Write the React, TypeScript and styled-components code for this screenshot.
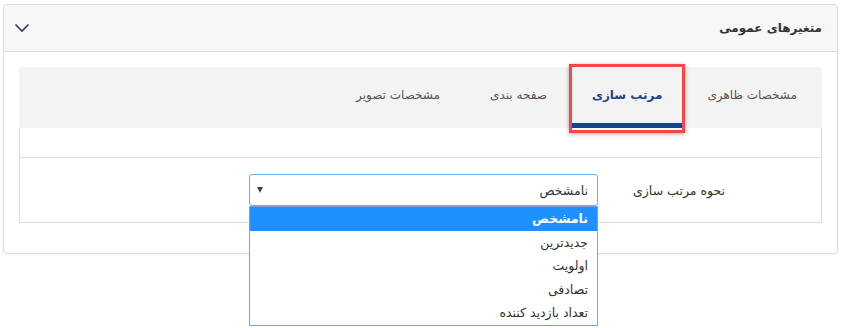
import React from "react";
import styled, { createGlobalStyle } from "styled-components";

const GlobalStyle = createGlobalStyle`
  html, body {
    margin: 0;
    min-height: 100%;
    background: #fff;
    font-family: "DejaVu Sans", "Noto Sans", sans-serif;
  }
`;

const Page = styled.div`
  min-height: 328px;
  padding: 4px 3px 0 3px;
  box-sizing: border-box;
`;

const Card = styled.div`
  border: 1px solid #dcdcdc;
  border-radius: 4px;
  background: #fff;
  box-shadow: 0 1px 2px rgba(0, 0, 0, 0.05);
`;

const CardHeader = styled.div`
  direction: rtl;
  display: flex;
  align-items: center;
  justify-content: space-between;
  height: 46px;
  padding: 0 15px 0 10px;
  background: #f7f7f7;
  border-bottom: 1px solid #dcdcdc;
  border-radius: 4px 4px 0 0;
`;

const Title = styled.h3`
  margin: 0;
  font-size: 12px;
  font-weight: bold;
  color: #333;
`;

const CardBody = styled.div`
  padding: 15px 15px 30px 15px;
`;

const TabPanel = styled.div`
  direction: rtl;
`;

const TabBar = styled.ul`
  display: flex;
  margin: 0;
  padding: 0;
  list-style: none;
  height: 61px;
  background: #f3f3f3;
`;

const Tab = styled.li<{ $active?: boolean }>`
  position: relative;
  display: flex;
  align-items: center;
  padding: 0 ${(p) => (p.$active ? 20 : 25)}px;
  font-size: 12px;
  color: ${(p) => (p.$active ? "#24408a" : "#555")};
  font-weight: ${(p) => (p.$active ? "bold" : "normal")};
  border-bottom: 5px solid ${(p) => (p.$active ? "#12449a" : "transparent")};
  box-sizing: border-box;
`;

const Highlight = styled.span`
  position: absolute;
  top: -3px;
  bottom: -10px;
  left: -3px;
  right: -3px;
  border: 3px solid #f24848;
  box-shadow: 0 1px 4px rgba(0, 0, 0, 0.35);
  pointer-events: none;
`;

const TabContent = styled.div`
  border: 1px solid #dcdcdc;
  border-top: none;
  padding-top: 29px;
`;

const FormRow = styled.div`
  display: flex;
  align-items: center;
  height: 64px;
  border-top: 1px solid #dcdcdc;
`;

const Label = styled.label`
  width: 223px;
  box-sizing: border-box;
  padding-right: 96px;
  font-size: 12.5px;
  color: #333;
  white-space: nowrap;
`;

const SelectWrap = styled.div`
  position: relative;
  width: 349px;
`;

const SelectBox = styled.div`
  display: flex;
  align-items: center;
  justify-content: space-between;
  height: 32px;
  box-sizing: border-box;
  padding: 0 9px 0 7px;
  border: 1px solid #66afe9;
  border-radius: 3px;
  font-size: 12.5px;
  color: #333;
`;

const Arrow = styled.span`
  width: 0;
  height: 0;
  border-left: 3px solid transparent;
  border-right: 3px solid transparent;
  border-top: 6px solid #444;
`;

const Options = styled.ul`
  position: absolute;
  z-index: 5;
  top: 32px;
  left: 0;
  right: 0;
  margin: 0;
  padding: 0;
  list-style: none;
  border: 1px solid #7f9fd8;
  background: #fff;
`;

const Option = styled.li<{ $selected?: boolean }>`
  height: 23.6px;
  line-height: 23.6px;
  padding: 0 9px;
  font-size: 12.5px;
  color: ${(p) => (p.$selected ? "#fff" : "#333")};
  font-weight: ${(p) => (p.$selected ? "bold" : "normal")};
  background: ${(p) => (p.$selected ? "#1e90ff" : "#fff")};
`;

const tabs = ["مشخصات ظاهری", "مرتب سازی", "صفحه بندی", "مشخصات تصویر"];
const options = ["نامشخص", "جدیدترین", "اولویت", "تصادفی", "تعداد بازدید کننده"];

export default function App() {
  return (
    <Page>
      <GlobalStyle />
      <Card>
        <CardHeader>
          <Title>متغیرهای عمومی</Title>
          <svg width="16" height="10" viewBox="0 0 16 10">
            <polyline points="1.5,1.5 8,8 14.5,1.5" fill="none" stroke="#2c3a5c" strokeWidth="1.6" />
          </svg>
        </CardHeader>
        <CardBody>
          <TabPanel>
            <TabBar>
              {tabs.map((t, i) => (
                <Tab key={t} $active={i === 1}>
                  {t}
                  {i === 1 && <Highlight />}
                </Tab>
              ))}
            </TabBar>
            <TabContent>
              <FormRow>
                <Label>نحوه مرتب سازی</Label>
                <SelectWrap>
                  <SelectBox>
                    <span>نامشخص</span>
                    <Arrow />
                  </SelectBox>
                  <Options>
                    {options.map((o, i) => (
                      <Option key={o} $selected={i === 0}>
                        {o}
                      </Option>
                    ))}
                  </Options>
                </SelectWrap>
              </FormRow>
            </TabContent>
          </TabPanel>
        </CardBody>
      </Card>
    </Page>
  );
}
